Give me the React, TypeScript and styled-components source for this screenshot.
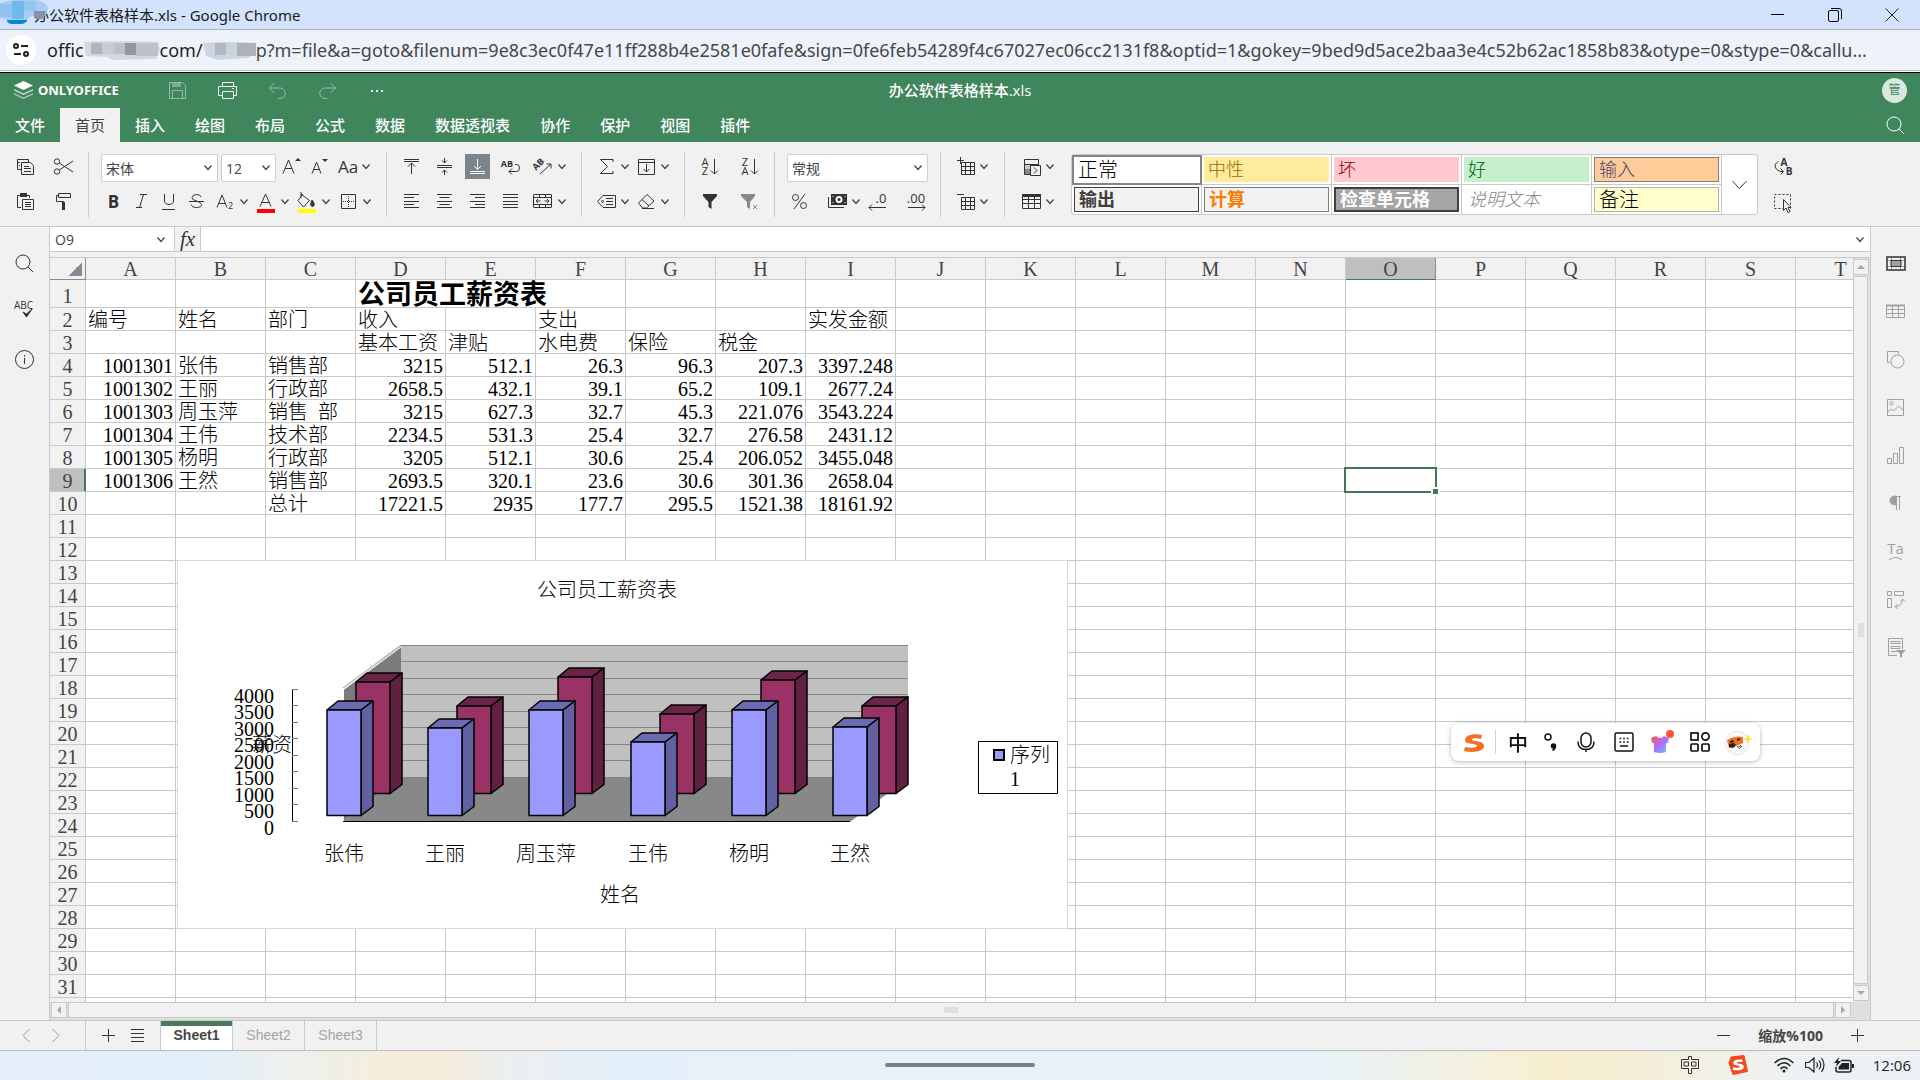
import React from "react";
import styled, { createGlobalStyle, css } from "styled-components";

const UI = `"Open Sans", "Noto Sans CJK SC", sans-serif`;
const CHROME = `"Noto Sans", "Noto Sans CJK SC", sans-serif`;
const SONG = `"Liberation Serif", "Noto Sans CJK SC", serif`;
const LINE = "#c9c9c9";
const PANEL = "#f1f1f1";
const GREEN = "#40865c";
const INK = "#333333";

const Global = createGlobalStyle`
  *, *::before, *::after { box-sizing: border-box; }
  body { margin: 0; background: #fff; font-family: ${UI}; font-size: 15px; color: ${INK}; }
  button, input, select { font: inherit; color: inherit; margin: 0; }
  svg { display: block; }
`;

const Page = styled.div`
  display: flex;
  flex-direction: column;
  height: 100vh;
  overflow: hidden;
`;

const PlainButton = styled.button`
  display: flex;
  align-items: center;
  justify-content: center;
  padding: 0;
  border: 0;
  background: transparent;
`;

/* ---------- browser window ---------- */

const TitleBar = styled.header`
  display: flex;
  align-items: center;
  flex: none;
  height: 30px;
  background: #d3e3fd;
  border-bottom: 1px solid #aeb2b8;
  color: #1a1a1a;
  font-family: ${CHROME};
`;
const TitleIcon = styled.div`
  position: relative;
  z-index: 1;
  flex: none;
  width: 34px;
  height: 29px;
`;
const TitleText = styled.div`
  flex: 1;
  padding-bottom: 1px;
  white-space: nowrap;
`;
const WindowButton = styled(PlainButton)`
  width: 57px;
  height: 29px;
`;
const UrlBar = styled.div`
  display: flex;
  align-items: center;
  flex: none;
  height: 41px;
  padding: 0 24px 0 6px;
  background: #edf2fb;
  border-bottom: 1px solid #b9bcc2;
`;
const SiteInfo = styled(PlainButton)`
  flex: none;
  width: 30px;
  height: 30px;
  margin-right: 11px;
  border-radius: 50%;
  background: #fff;
`;
const UrlText = styled.div`
  flex: 1;
  display: flex;
  align-items: center;
  min-width: 0;
  font-family: ${CHROME};
  font-size: 18px;
  line-height: 28px;
  color: #474747;
`;
const UrlHost = styled.span`
  color: #1f1f1f;
`;
const UrlTail = styled.span`
  flex: 1;
  min-width: 0;
  overflow: hidden;
  white-space: nowrap;
`;
const Mosaic = styled.svg`
  flex: none;
`;

/* ---------- application header ---------- */

const AppHeader = styled.div`
  flex: none;
  margin-top: 1px;
  border-top: 1px solid #000;
  background: ${GREEN};
  color: #fff;
`;
const HeaderRow = styled.div`
  display: grid;
  grid-template-columns: 1fr auto 1fr;
  align-items: center;
  height: 35px;
`;
const HeaderLeft = styled.div`
  display: flex;
  align-items: center;
`;
const Brand = styled.div`
  display: flex;
  align-items: center;
  gap: 5px;
  width: 152px;
  padding: 0 0 2px 14px;
  font-family: ${CHROME};
  font-size: 13px;
  font-weight: 700;
`;
const HeaderButton = styled(PlainButton)<{ $dim?: boolean }>`
  width: 50px;
  height: 30px;
  opacity: ${(p) => (p.$dim ? 0.45 : 0.9)};
`;
const DocTitle = styled.div`
  padding-bottom: 2px;
  font-weight: 500;
`;
const Avatar = styled.div`
  justify-self: end;
  width: 25px;
  height: 25px;
  margin-right: 13px;
  border-radius: 50%;
  background: #d9e7de;
  color: ${GREEN};
  font-size: 12px;
  line-height: 24px;
  text-align: center;
`;
const TabRow = styled.nav`
  display: flex;
  height: 34px;
`;
const RibbonTab = styled.button<{ $on?: boolean }>`
  padding: 0 15px;
  border: 0;
  background: ${(p) => (p.$on ? PANEL : "transparent")};
  && { color: ${(p) => (p.$on ? "#444" : "#fff")}; font-weight: ${(p) => (p.$on ? 400 : 500)}; }
  line-height: 34px;
`;
const TabSearch = styled(PlainButton)`
  width: 25px;
  height: 34px;
  margin: 0 12px 0 auto;
`;

/* ---------- toolbar ---------- */

const Toolbar = styled.div`
  display: flex;
  flex: none;
  height: 85px;
  padding: 12px 0 11px;
  background: ${PANEL};
  border-bottom: 1px solid ${LINE};
`;
const Group = styled.div`
  display: flex;
  flex-direction: column;
  flex: none;
  gap: 10px;
  padding: 2px 12px 0;
  border-right: 1px solid ${LINE};
  height: 65px;
  margin-top: -2px;
  &:first-child { padding-left: 13px; }
  &:last-child { border-right: 0; }
`;
const WideGroup = styled(Group)<{ $last?: boolean }>`
  padding-left: ${(p) => (p.$last ? 14 : 12)}px;
  padding-right: ${(p) => (p.$last ? 14 : 13)}px;
  ${(p) => p.$last && css`border-right: 0;`}
`;
const ToolRow = styled.div<{ $gap: number }>`
  display: flex;
  height: 25px;
  gap: ${(p) => p.$gap}px;
`;
const NumberRow = styled.div`
  display: grid;
  grid-template-columns: 38px 39px 39px 25px;
  justify-items: start;
`;
const Tool = styled(PlainButton)<{ $on?: boolean }>`
  flex: none;
  height: 25px;
  background: ${(p) => (p.$on ? "#7d858c" : "transparent")};
  && { color: ${(p) => (p.$on ? "#fff" : INK)}; }
`;
const SelectBox = styled.span<{ $w: number }>`
  position: relative;
  flex: none;
  width: ${(p) => p.$w}px;
  height: 28px;
  select {
    appearance: none;
    width: 100%;
    height: 28px;
    padding: 0 4px;
    border: 1px solid #cfcfcf;
    border-radius: 2px;
    background: #fff;
    color: #444;
    font-size: 14px;
  }
  svg {
    position: absolute;
    right: 3px;
    top: 1px;
    pointer-events: none;
  }
`;
const StyleGallery = styled.div`
  display: flex;
  flex: none;
  height: 61px;
  border: 1px solid ${LINE};
  border-radius: 3px;
  background: #fff;
`;
const StyleGrid = styled.div`
  display: grid;
  grid-template-columns: repeat(5, 130px);
  grid-template-rows: 30px 29px;
`;
const StyleSlot = styled.div<{ $picked?: boolean }>`
  padding: 2px;
  border-right: 1px solid ${LINE};
  border-bottom: 1px solid ${LINE};
  ${(p) => p.$picked && css`
    padding: 0;
    border: 2px solid #858585;
  `}
  &:nth-child(n + 6) { border-bottom: 0; }
`;
const StyleChip = styled.button<{ $bg: string; $fg: string; $edge: string; $bold?: boolean; $italic?: boolean; $big?: boolean }>`
  display: block;
  width: 100%;
  height: 100%;
  padding: 0 4px;
  border: ${(p) => p.$edge};
  background: ${(p) => p.$bg};
  && {
    color: ${(p) => p.$fg};
    font-family: ${SONG};
    font-size: ${(p) => (p.$big ? 20 : 18)}px;
    font-weight: ${(p) => (p.$bold ? 700 : 300)};
    font-style: ${(p) => (p.$italic ? "italic" : "normal")};
    line-height: 22px;
  }
  text-align: left;
  overflow: hidden;
`;
const MoreStyles = styled(PlainButton)`
  width: 35px;
`;

/* ---------- work area ---------- */

const Work = styled.div`
  display: flex;
  flex: 1;
  min-height: 0;
  background: ${PANEL};
`;
const LeftRail = styled.aside`
  display: flex;
  flex-direction: column;
  align-items: center;
  flex: none;
  width: 50px;
  padding-top: 12px;
  border-right: 1px solid ${LINE};
`;
const RightRail = styled(LeftRail)`
  border-right: 0;
  border-left: 1px solid ${LINE};
`;
const RailButton = styled(PlainButton)<{ $dim?: boolean }>`
  width: 48px;
  height: 48px;
  flex: none;
  && { color: ${(p) => (p.$dim ? "#a0a0a0" : INK)}; }
`;
const Center = styled.main`
  display: flex;
  flex-direction: column;
  flex: 1;
  min-width: 0;
`;
const FormulaBar = styled.div`
  display: flex;
  flex: none;
  height: 25px;
  margin-bottom: 5px;
  padding-right: 3px;
  border-bottom: 1px solid ${LINE};
  background: #fff;
`;
const NameBox = styled.div`
  display: flex;
  align-items: center;
  width: 125px;
  border-right: 1px solid ${LINE};
  input {
    width: 105px;
    padding: 0 5px;
    border: 0;
    background: transparent;
    color: #444;
    font-size: 14px;
  }
`;
const FxButton = styled(PlainButton)`
  width: 26px;
  border-right: 1px solid ${LINE};
  background: ${PANEL};
  && { font: italic 21px "Liberation Serif", serif; }
`;
const FormulaInput = styled.input`
  flex: 1;
  min-width: 0;
  border: 0;
  background: #fff;
`;
const SheetRow = styled.div`
  display: flex;
  flex: 1;
  min-height: 0;
  border-top: 1px solid ${LINE};
`;
const SheetView = styled.div`
  position: relative;
  flex: 1;
  min-width: 0;
  overflow: hidden;
  background: #fff;
`;
const Sheet = styled.table`
  width: 1836px;
  table-layout: fixed;
  border-collapse: separate;
  border-spacing: 0;
  font-family: ${SONG};
  font-size: 20px;
  font-weight: 300;
  line-height: 20px;
  color: #000;
`;
const Head = styled.th<{ $on?: "col" | "row" }>`
  height: 22px;
  padding: 2px 0 0;
  border-right: 1px solid ${LINE};
  border-bottom: 1px solid ${LINE};
  background: ${(p) => (p.$on ? "#bfbfbf" : PANEL)};
  color: #444;
  font-weight: 400;
  line-height: 19px;
  ${(p) => p.$on === "col" && css`border-bottom-color: #3f7a58; border-right-color: #8c8c8c;`}
  ${(p) => p.$on === "row" && css`box-shadow: inset -1px 0 #3f7a58; border-right-color: #3f7a58;`}
`;
const RowHead = styled(Head)<{ $tall?: boolean }>`
  height: ${(p) => (p.$tall ? 28 : 23)}px;
  padding-top: ${(p) => (p.$tall ? 6 : 2)}px;
`;
const Corner = styled(Head)`
  border-right-color: #8c8c8c;
  border-bottom-color: #8c8c8c;
  background: linear-gradient(135deg, transparent 50%, #858b96 50%) right 3px bottom 3px / 14px 14px no-repeat, ${PANEL};
`;
const Cell = styled.td<{ $num?: boolean; $title?: boolean; $active?: boolean }>`
  position: relative;
  padding: 2px 2px 0;
  border-right: 1px solid ${LINE};
  border-bottom: 1px solid ${LINE};
  text-align: ${(p) => (p.$num ? "right" : "left")};
  white-space: pre;
  ${(p) => p.$title && css`
    padding-top: 4px;
    font-size: 27px;
    font-weight: 700;
    line-height: 23px;
  `}
  ${(p) => p.$active && css`
    z-index: 1;
    &::before {
      content: "";
      position: absolute;
      inset: -2px;
      border: 2px solid #3f7a58;
    }
    &::after {
      content: "";
      position: absolute;
      right: -5px;
      bottom: -5px;
      width: 9px;
      height: 9px;
      border: 2px solid #fff;
      background: #3f7a58;
    }
  `}
`;
const ChartFrame = styled.figure`
  position: absolute;
  left: 127px;
  top: 302px;
  margin: 0;
  background: #fff;
  border: 1px solid #d9d9d9;
`;
const ChartText = styled.text`
  font-family: ${SONG};
  font-size: 20px;
  font-weight: 300;
  fill: #000;
`;
const VScroll = styled.div`
  display: flex;
  flex-direction: column;
  gap: 1px;
  flex: none;
  width: 17px;
  padding: 1px 2px 1px 0;
  background: #dfdfdf;
`;
const HScroll = styled.div`
  display: flex;
  flex: none;
  gap: 1px;
  height: 18px;
  padding: 0 19px 2px 1px;
  background: #dfdfdf;
`;
const ScrollButton = styled(PlainButton)`
  flex: none;
  width: 16px;
  height: 16px;
  border: 1px solid ${LINE};
  background: ${PANEL};
`;
const ScrollThumb = styled.div`
  display: flex;
  align-items: center;
  justify-content: center;
  flex: 1;
  border: 1px solid ${LINE};
  background: ${PANEL};
`;
const Grip = styled.span<{ $tall?: boolean }>`
  width: ${(p) => (p.$tall ? 6 : 14)}px;
  height: ${(p) => (p.$tall ? 14 : 6)}px;
  background: #dedede;
`;

/* ---------- sheet tabs ---------- */

const StatusBar = styled.div`
  display: flex;
  flex: none;
  height: 31px;
  border-top: 1px solid ${LINE};
  border-bottom: 1px solid #bbb;
  background: ${PANEL};
`;
const StatusGroup = styled.div`
  display: flex;
  align-items: center;
  justify-content: center;
  gap: 2px;
  border-right: 1px solid ${LINE};
  &:first-child { width: 86px; padding-right: 3px; }
  &:nth-child(2) { width: 75px; }
`;
const StatusButton = styled(PlainButton)`
  width: 27px;
  height: 27px;
`;
const SheetTab = styled.button<{ $on?: boolean }>`
  width: 72px;
  padding: 0 0 2px;
  border: 0;
  border-right: 1px solid ${LINE};
  background: ${(p) => (p.$on ? "#fff" : "transparent")};
  box-shadow: ${(p) => (p.$on ? "inset 0 5px #4b7a5d" : "none")};
  && {
    color: ${(p) => (p.$on ? "#444" : "#a5a5a5")};
    font-family: "Liberation Sans", sans-serif;
    font-size: 14px;
    font-weight: ${(p) => (p.$on ? 700 : 400)};
  }
`;
const ZoomBox = styled.div`
  display: flex;
  align-items: center;
  gap: 21px;
  margin-left: auto;
  padding-right: 49px;
`;
const ZoomLabel = styled.span`
  padding-bottom: 2px;
  font-size: 14px;
  font-weight: 700;
  color: #444;
`;

/* ---------- desktop ---------- */

const Taskbar = styled.footer`
  display: grid;
  grid-template-columns: 1fr auto 1fr;
  align-items: center;
  flex: none;
  height: 29px;
  padding-bottom: 1px;
  background: linear-gradient(90deg, #e6f0fa 0%, #e2effb 10%, #edf0ee 15%, #f4eedd 20%, #f4ecd9 23%, #edefef 26%, #e4f0fa 32%, #e8f1f8 45%, #e6f1f9 60%, #e9f1f5 70%, #f3f0dd 77%, #f7efcf 81%, #f4efdb 86%, #eef1f2 93%, #ebf1f6 100%);
`;
const HomePill = styled.div`
  grid-column: 2;
  width: 150px;
  height: 4px;
  border-radius: 2px;
  background: #7c7f82;
`;
const Tray = styled.div`
  display: flex;
  align-items: center;
  justify-content: flex-end;
  padding-right: 9px;
  color: #222;
`;
const TrayIcon = styled.div<{ $w: number }>`
  display: flex;
  justify-content: center;
  width: ${(p) => p.$w}px;
`;
const Clock = styled.time`
  width: 52px;
  text-align: right;
`;
const ImeBar = styled.div`
  position: fixed;
  right: 160px;
  top: 723px;
  display: flex;
  align-items: center;
  height: 38px;
  padding: 0 3px 0 9px;
  border-radius: 8px;
  background: #fff;
  box-shadow: 0 1px 5px rgba(0, 0, 0, 0.28);
  color: #111;
`;
const ImeButton = styled(PlainButton)<{ $w: number }>`
  width: ${(p) => p.$w}px;
  height: 34px;
  && { font-size: 20px; font-weight: 500; }
`;
const ImeRule = styled.span`
  width: 1px;
  height: 24px;
  margin: 0 5px 0 8px;
  background: #d0d0d0;
`;

/* ---------- icons, drawn on a 25px box ---------- */

const T = ({ x, y, s, b, children }: { x: number; y: number; s: number; b?: boolean; children: React.ReactNode }) => (
  <text x={x} y={y} fontSize={s} fontWeight={b ? 700 : 400} textAnchor="middle" fill="currentColor" stroke="none" fontFamily={'"Open Sans", sans-serif'}>{children}</text>
);

const cells = (x: number, y: number) => (
  <path d={`M${x} ${y}h13v12h-13zM${x} ${y + 4}h13M${x} ${y + 8}h13M${x + 4} ${y}v12M${x + 9} ${y}v12`} />
);

const ICONS: Record<string, React.ReactNode> = {
  copy: <path d="M8 15.500H4.500V5.500H15.500V8M8.500 8.500H17.500L20.500 11.500V20.500H8.500ZM11 12.500H16M11 14.500H18M11 17.500H18M7 8.500H4.500M7 11.500H6" />,
  cut: <><circle cx="6" cy="7.500" r="2.700" /><circle cx="6" cy="17.500" r="2.700" /><path d="M8.200 9L22 18M8.200 16L22 7" /></>,
  paste: <><path d="M8 18.500H4.500V6.500H16.500V9M9.500 10.500H20.500V20.500H9.500ZM12 13.500H18M12 15.500H18M12 17.500H18" /><path d="M7 4h7v4H7z" fill="currentColor" stroke="none" /></>,
  brush: <><path d="M7.500 4.500H19.500V8.500H7.500ZM7.500 6.500H5.500V12.500H12.500V14" /><path d="M11 13h3v8h-3z" fill="currentColor" stroke="none" /></>,
  fontUp: <><path d="M4 19.500L9.500 6L15 19.500M6 14.500H13" /><path d="M16 7l3-3 3 3z" fill="currentColor" stroke="none" /></>,
  fontDown: <><path d="M5 19.500L9.500 8L14 19.500M6.500 15.500H12.500" /><path d="M15 5l3 3 3-3z" fill="currentColor" stroke="none" /></>,
  caseAa: <T x={13} y={19} s={17}>Aa</T>,
  bold: <T x={12.5} y={19} s={17} b>B</T>,
  italic: <path d="M11 5.500H18M7 18.500H13M14.500 5.500L10.500 18.500" />,
  underline: <path d="M7.500 5V13A5 4.500 0 0 0 16.500 13V5M5 20.500H18" />,
  strike: <><path d="M16 8Q15.500 5.500 11.500 5.500T7 8.500Q7 11 11.500 12T16.500 15.500Q16.500 18.500 11.500 18.500T6.500 15.500M4 12.500H19" /></>,
  sub: <><path d="M4 18.500L9 6L14 18.500M6 14.500H12.500" /><T x={17.5} y={20} s={9}>2</T></>,
  fontColor: <><path d="M6 17.500L11.500 5L17 17.500M8 13.500H15" /><path d="M3 20h18v4H3z" fill="#ff0000" stroke="none" /></>,
  fillColor: <><path d="M6 5l8.500 6.500-6 6.500-5.500-6.500 5-6.500M6 3v6" /><path d="M17 11q4 5 1 6.500q-4 0-1-6.500z" fill="currentColor" /><path d="M3 20h18v4H3z" fill="#ffff00" stroke="none" /></>,
  borders: <><path d="M5.500 5.500h14v14h-14z" /><path d="M12.500 7v12M7 12.500h12" strokeDasharray="1 1" /></>,
  alignTop: <path d="M5 5.500H20M5 7.500H20M12.500 20V9M9 12.500L12.500 9L16 12.500" />,
  alignMiddle: <path d="M5 11.500H20M5 13.500H20M12.500 4V9M10 6.500L12.500 9L15 6.500M12.500 21V16M10 18.500L12.500 16L15 18.500" />,
  alignBottom: <path d="M5 17.500H20M5 19.500H20M12.500 5V15M9 12L12.500 15.500L16 12" />,
  wrap: <><T x={9} y={13} s={9} b>AB</T><path d="M17 10.500H18.500A3 3.500 0 0 1 18.500 17.500H11M14 14.500L11 17.500L14 20.500" /></>,
  orient: <><g transform="rotate(-45 8 11)"><T x={8} y={13} s={9} b>AB</T></g><path d="M9 20L20 10M15.500 10H20V14.500" /></>,
  left: <path d="M5 5.500H20M5 8.500H15M5 12.500H20M5 15.500H15M5 18.500H20" />,
  center: <path d="M5 5.500H20M7.500 8.500H17.500M5 12.500H20M7.500 15.500H17.500M5 18.500H20" />,
  right: <path d="M5 5.500H20M10 8.500H20M5 12.500H20M10 15.500H20M5 18.500H20" />,
  justify: <path d="M5 5.500H20M5 8.500H20M5 12.500H20M5 15.500H20M5 18.500H20" />,
  merge: <path d="M3 5.500H20M2.500 5.500V18.500M20.500 5.500V18.500M3 18.500H20M3 8.500H20M3 15.500H20M8.500 5V8M14.500 5V8M8.500 16V19M14.500 16V19M5 12H9.500M13.500 12H18M7 10L5 12L7 14M16 10L18 12L16 14" />,
  sum: <path d="M19 8V5.500H6.500L13.500 12.500L6.500 19.500H19V17" />,
  fillDown: <path d="M4.500 5.500H20.500V20.500H4.500ZM4.500 8.500H20.500M12.500 10V18M9.500 15L12.500 18L15.500 15" />,
  tag: <><path d="M9 6.500H21.500V18.500H9L3.500 12.500ZM12 9.500H19M12 12.500H19M12 15.500H19" /><circle cx="8.500" cy="12.500" r="1" /></>,
  eraser: <path d="M4.500 14L13 5.500L20 12L12.500 19H8.500ZM8 10.500L15 17M8 19.500H20" />,
  sortAZ: <><T x={8} y={12} s={11}>A</T><T x={8} y={21} s={11}>Z</T><path d="M17.500 5V20M14 16.500L17.500 20L21 16.500" /></>,
  sortZA: <><T x={8} y={12} s={11}>Z</T><T x={8} y={21} s={11}>A</T><path d="M17.500 5V20M14 16.500L17.500 20L21 16.500" /></>,
  filter: <path d="M6 5h14v2l-5.500 6v7l-3-2v-5l-5.500-6z" fill="currentColor" stroke="none" />,
  clearFilter: <g opacity="0.550"><path d="M4 5h14v2l-5 6v7l-3-2v-5l-6-6z" fill="currentColor" stroke="none" /><path d="M16 16l4 4M20 16l-4 4" /></g>,
  percent: <><circle cx="8.500" cy="8.500" r="3" /><circle cx="16.500" cy="16.500" r="3" /><path d="M18 5L7 20" /></>,
  money: <><path d="M6 5h16v11H6z" fill="currentColor" stroke="none" /><path d="M3.500 8V18.500H19" /><circle cx="14" cy="10.500" r="3.500" fill="#fff" stroke="none" /><circle cx="14" cy="10.500" r="1.500" fill="currentColor" stroke="none" /><path d="M8 7v1M20 7v1M8 13v1M20 13v1" stroke="#fff" /></>,
  decLess: <><T x={17} y={14} s={13}>.0</T><path d="M22 18.500H5M8 15.500L5 18.500L8 21.500" /></>,
  decMore: <><T x={13} y={14} s={13}>.00</T><path d="M5 18.500H22M19 15.500L22 18.500L19 21.500" /></>,
  insertCells: <>{cells(8.5, 8.5)}<path d="M4 6.500H11M7.500 3V10" /></>,
  deleteCells: <>{cells(8.5, 8.5)}<path d="M4 5.500H11" /></>,
  condFormat: <><path d="M5.500 5.500H19.500V20.500H5.500ZM5.500 10.500H19.500M5.500 15.500H12" /><path d="M6 15h6v5H6z" fill="#888" stroke="none" /><path d="M6 11h13v4H6z" fill="#ccc" stroke="none" /><path d="M11.500 11.500h10v10h-10z" fill="#f1f1f1" /><path d="M15 13.500l3 3-3 3" /></>,
  table: <><path d="M3.500 5.500h18v14h-18zM3.500 10.500h18M3.500 14.500h18M9.500 7v12M15.500 7v12" /><path d="M3 5h19v3H3z" fill="currentColor" stroke="none" /></>,
  replace: <><T x={14} y={12} s={10} b>A</T><T x={19} y={21} s={10} b>B</T><path d="M8 7.500Q1 13 10 17.500H13M10.500 14.500L13.500 17.500L10.500 20.500" /></>,
  selectAll: <><path d="M4.500 5.500h16v14h-16z" strokeDasharray="2 2" /><path d="M13.500 10.500V21.500L16 19L18 23.500L20 22.500L18 18.500H21Z" fill="#f1f1f1" /></>,
  search: <><circle cx="11" cy="11" r="7" /><path d="M16 16L21 21" /></>,
  spell: <><T x={11.5} y={10} s={10}>ABC</T><path d="M11 13l3.500 5L20 10l-5.500 5z" fill="currentColor" /></>,
  info: <><circle cx="12.500" cy="12.500" r="9" /><path d="M12.500 11V17M12.500 8V9.500" /></>,
  cellSet: <><path d="M4 6h18v13H4z" strokeWidth="1.500" /><path d="M4 9.500H22M4 15.500H22M8.500 6V19M17.500 6V19" opacity="0.500" /><path d="M8 9.500h10v6H8z" fill="#a0a0a0" /></>,
  tableSet: <><path d="M3.500 6.500h18v12h-18zM3.500 10.500h18M3.500 14.500h18M9.500 6v12M15.500 6v12" /><path d="M3 5.500h19v2H3z" fill="currentColor" stroke="none" /></>,
  shape: <><path d="M7 15.500H4.500V4.500H15.500V7" /><circle cx="14.500" cy="14.500" r="6.500" /></>,
  image: <><path d="M4.500 4.500h16v16h-16zM4.500 17l4-3 2 2 5-5 5 4.500" /><circle cx="8.500" cy="8.500" r="1.700" /></>,
  chart: <path d="M4.500 15.500h4v5h-4zM10.500 10.500h4v10h-4zM16.500 4.500h4v16h-4z" />,
  para: <><path d="M11 5.500H18M13.500 5.500V19M16.500 5.500V19" /><path d="M13 5Q7 5 7 9.500T13 14z" fill="currentColor" /></>,
  textArt: <><T x={12.5} y={15} s={15}>Ta</T><path d="M6 21Q12.500 16 19 21" /></>,
  pivot: <path d="M4.500 4.500h4v4h-4zM11.500 4.500h9v4h-9zM4.500 11.500h4v9h-4zM12 19.500Q19 20 19.500 12.500M17 14.500L19.500 12L22 14.500M14.500 17L12 19.500L14.500 22" />,
  slicer: <><path d="M14 20.500H5.500V3.500H19.500V14M8 6.500H17V8.500H8ZM8 11.500H17V13.500H8ZM8 16.500H14" /><path d="M13 15h10l-4 4v4l-2-1.500V19z" fill="currentColor" stroke="none" /></>,
  save: <><path d="M4.500 4.500H17.500L20.500 7.500V20.500H4.500ZM7.500 20V12.500H17.500V20" /><path d="M7 4h9v5H7z" fill="currentColor" stroke="none" opacity="0.700" /></>,
  print: <path d="M7.500 9V4.500H18.500V9M7 17.500H3.500V8.500H21.500V17.500H19M7.500 13.500H18.500V20.500H7.500ZM17 10.500H19" />,
  undo: <path d="M9.500 5L4.500 10L9.500 15M4.500 10H15A5 5 0 0 1 15 20.500H13" />,
  redo: <path d="M15.500 5L20.500 10L15.500 15M20.500 10H10A5 5 0 0 0 10 20.500H12" />,
  dots: <path d="M6 12h2v2H6zM11 12h2v2h-2zM16 12h2v2h-2z" fill="currentColor" stroke="none" />,
  prev: <path d="M15.500 6L9 12.500L15.500 19" stroke="#999" />,
  next: <path d="M9.500 6L16 12.500L9.500 19" stroke="#999" />,
  plus: <path d="M6 12.500H19M12.500 6V19" />,
  minus: <path d="M6 12.500H19" />,
  list: <path d="M6 6.500H19M6 10.500H19M6 14.500H19M6 18.500H19" />,
  bigChevron: <path d="M5.500 9L12.500 16.500L19.500 9" />,
};

const Icon = ({ name }: { name: string }) => (
  <svg width="25" height="25" viewBox="0 0 25 25" fill="none" stroke="currentColor" strokeWidth="1" aria-hidden="true">{ICONS[name]}</svg>
);
const Chevron = () => (
  <svg width="13" height="25" viewBox="0 0 13 25" fill="none" stroke="#444" strokeWidth="1.300" aria-hidden="true"><path d="M2.500 10.500L6 14.500L9.500 10.500" /></svg>
);
const Btn = ({ n, l, drop, on }: { n: string; l: string; drop?: boolean; on?: boolean }) => (
  <Tool type="button" aria-label={l} $on={on}><Icon name={n} />{drop && <Chevron />}</Tool>
);
const Pick = ({ label, value, w }: { label: string; value: string; w: number }) => (
  <SelectBox $w={w}>
    <select aria-label={label} defaultValue={value}><option>{value}</option></select>
    <Chevron />
  </SelectBox>
);

/* ---------- sheet data ---------- */

const COLS = "ABCDEFGHIJKLMNOPQRST".split("");
const ROWS = Array.from({ length: 31 }, (_, i) => i + 1);
const DATA: Record<number, Record<string, string>> = {
  1: { D: "公司员工薪资表" },
  2: { A: "编号", B: "姓名", C: "部门", D: "收入", F: "支出", I: "实发金额" },
  3: { D: "基本工资", E: "津贴", F: "水电费", G: "保险", H: "税金" },
  4: { A: "1001301", B: "张伟", C: "销售部", D: "3215", E: "512.1", F: "26.3", G: "96.3", H: "207.3", I: "3397.248" },
  5: { A: "1001302", B: "王丽", C: "行政部", D: "2658.5", E: "432.1", F: "39.1", G: "65.2", H: "109.1", I: "2677.24" },
  6: { A: "1001303", B: "周玉萍", C: "销售  部", D: "3215", E: "627.3", F: "32.7", G: "45.3", H: "221.076", I: "3543.224" },
  7: { A: "1001304", B: "王伟", C: "技术部", D: "2234.5", E: "531.3", F: "25.4", G: "32.7", H: "276.58", I: "2431.12" },
  8: { A: "1001305", B: "杨明", C: "行政部", D: "3205", E: "512.1", F: "30.6", G: "25.4", H: "206.052", I: "3455.048" },
  9: { A: "1001306", B: "王然", C: "销售部", D: "2693.5", E: "320.1", F: "23.6", G: "30.6", H: "301.36", I: "2658.04" },
  10: { C: "总计", D: "17221.5", E: "2935", F: "177.7", G: "295.5", H: "1521.38", I: "18161.92" },
};

const Grid = () => (
  <Sheet>
    <colgroup>
      <col style={{ width: 36 }} />
      {COLS.map((c) => <col key={c} />)}
    </colgroup>
    <thead>
      <tr>
        <Corner />
        {COLS.map((c) => <Head key={c} scope="col" $on={c === "O" ? "col" : undefined}>{c}</Head>)}
      </tr>
    </thead>
    <tbody>
      {ROWS.map((r) => (
        <tr key={r}>
          <RowHead scope="row" $tall={r === 1} $on={r === 9 ? "row" : undefined}>{r}</RowHead>
          {COLS.filter((c) => !(r === 1 && (c === "E" || c === "F"))).map((c) => {
            const v = DATA[r]?.[c];
            const title = r === 1 && c === "D";
            return (
              <Cell key={c} colSpan={title ? 3 : 1} $title={title} $num={!!v && /^[\d.]+$/.test(v)} $active={r === 9 && c === "O"}>{v}</Cell>
            );
          })}
        </tr>
      ))}
      <tr>
        <RowHead as="td" />
        {COLS.map((c) => <Cell key={c} />)}
      </tr>
    </tbody>
  </Sheet>
);

/* ---------- chart ---------- */

const PEOPLE = [
  { name: "张伟", front: 710, back: 682 },
  { name: "王丽", front: 728, back: 706 },
  { name: "周玉萍", front: 710, back: 677 },
  { name: "王伟", front: 742, back: 714 },
  { name: "杨明", front: 710, back: 680 },
  { name: "王然", front: 727, back: 706 },
];
const STEP = [0, 101, 202, 304, 405, 506];
const TICKS = [0, 16, 33, 49, 66, 82, 99, 115, 132];

const Bar = ({ x, top, base, colors }: { x: number; top: number; base: number; colors: string[] }) => (
  <g stroke="#000" strokeWidth="1.500" strokeLinejoin="round">
    <path d={`M${x} ${top}l11 -9h35l-12 9z`} fill={colors[1]} />
    <path d={`M${x + 34} ${top}l12 -9V${base - 9}l-12 9z`} fill={colors[2]} />
    <path d={`M${x} ${top}h34V${base}h-34z`} fill={colors[0]} />
  </g>
);

const Chart = () => (
  <ChartFrame>
    <svg width="889" height="367" viewBox="178 561 889 367" role="img" aria-label="公司员工薪资表">
      <ChartText x="607" y="597" textAnchor="middle">公司员工薪资表</ChartText>
      <path d="M344 689L401 646V778L344 821Z" fill="#7b7b7b" />
      <path d="M401 645H908V778H401Z" fill="#c0c0c0" />
      <path d="M344 821L401 778H908L850 822H344Z" fill="#888" />
      <path d="M343 688L401 645" stroke="#999" />
      <path d="M343 690L401 647" stroke="#fff" />
      <g stroke="#858585">{TICKS.map((t) => <path key={t} d={`M401 ${645.5 + t}H908`} />)}</g>
      <path d="M343 821.500H850" stroke="#000" />
      <path d="M292.500 689V822" stroke="#000" />
      <g stroke="#777">{TICKS.map((t) => <path key={t} d={`M292 ${689.5 + t}H298`} />)}</g>
      {PEOPLE.map((p, i) => <Bar key={p.name} x={356 + STEP[i]} top={p.back} base={793.5} colors={["#993366", "#6b2447", "#612041"]} />)}
      {PEOPLE.map((p, i) => <Bar key={p.name} x={327 + STEP[i]} top={p.front} base={815.5} colors={["#9999ff", "#6b6bb3", "#6161a2"]} />)}
      {TICKS.map((t, i) => <ChartText key={t} x="274" y={703 + t} textAnchor="end">{4000 - i * 500}</ChartText>)}
      <ChartText x="272" y="752" textAnchor="middle">薪资</ChartText>
      {PEOPLE.map((p, i) => <ChartText key={p.name} x={344 + STEP[i]} y="861" textAnchor="middle">{p.name}</ChartText>)}
      <ChartText x="620" y="902" textAnchor="middle">姓名</ChartText>
      <path d="M978.500 741.500h79v52h-79z" fill="#fff" stroke="#000" />
      <path d="M994 750h10v10h-10z" fill="#9999ff" stroke="#000" strokeWidth="2" />
      <ChartText x="1010" y="762">序列</ChartText>
      <ChartText x="1010" y="786">1</ChartText>
    </svg>
  </ChartFrame>
);

/* ---------- style gallery ---------- */

const STYLES = [
  { t: "正常", $bg: "#fff", $fg: "#000", $edge: "0", $big: true, picked: true },
  { t: "中性", $bg: "#ffeb9c", $fg: "#9c6500", $edge: "0" },
  { t: "坏", $bg: "#ffc7ce", $fg: "#9c0006", $edge: "0" },
  { t: "好", $bg: "#c6efce", $fg: "#006100", $edge: "0" },
  { t: "输入", $bg: "#ffcc99", $fg: "#3f3f76", $edge: "1px solid #7f7f7f" },
  { t: "输出", $bg: "#f2f2f2", $fg: "#3f3f3f", $edge: "1px solid #3f3f3f", $bold: true },
  { t: "计算", $bg: "#f2f2f2", $fg: "#fa7d00", $edge: "1px solid #7f7f7f", $bold: true },
  { t: "检查单元格", $bg: "#a5a5a5", $fg: "#fff", $edge: "2px solid #3f3f3f", $bold: true },
  { t: "说明文本", $bg: "#fff", $fg: "#7f7f7f", $edge: "0", $italic: true },
  { t: "备注", $bg: "#ffffcc", $fg: "#000", $edge: "1px solid #b2b2b2", $big: true },
];

const Triangle = ({ d }: { d: string }) => (
  <svg width="8" height="8" viewBox="0 0 8 8" fill="#a8a8a8" aria-hidden="true"><path d={d} /></svg>
);

const LETTER_S = "M20 3C12 1 3 3 3 8C3 13 15 11 15 14C15 16 8 16 3 15L2 19C10 21 22 20 22 14C22 8 10 10 10 7.500C10 5.500 16 6 19 7Z";

export default function App() {
  return (
    <Page>
      <Global />
      <TitleBar>
        <TitleIcon>
          <svg width="48" height="29" viewBox="0 0 48 29" aria-hidden="true">
            <path d="M7 18h20v3q-2 3-5 3H12q-4 0-5-3z" fill="#0d86d6" />
            <path d="M0 3q8-3 18-3h20q10 3 10 10l-3 6H32l-6 4H8L0 18z" fill="#a9cdf2" />
            <path d="M0 4h12v13H0z" fill="#8fc4f1" /><path d="M12 1h12v18H12z" fill="#6fb9ec" /><path d="M24 1h12v10H24z" fill="#90c8f0" />
            <path d="M34 11h12l-2 7q-6 3-10 0z" fill="#8792a8" />
          </svg>
        </TitleIcon>
        <TitleText>办公软件表格样本.xls - Google Chrome</TitleText>
        <WindowButton type="button" aria-label="最小化"><svg width="14" height="14" stroke="#000"><path d="M0 6.500H13" /></svg></WindowButton>
        <WindowButton type="button" aria-label="还原"><svg width="14" height="14" fill="none" stroke="#000"><rect x="0.500" y="2.500" width="10" height="11" rx="1.500" /><path d="M3 0.500H11Q13.500 0.500 13.500 3V11" /></svg></WindowButton>
        <WindowButton type="button" aria-label="关闭"><svg width="14" height="14" stroke="#222"><path d="M0.500 0.500L13.500 13.500M13.500 0.500L0.500 13.500" /></svg></WindowButton>
      </TitleBar>
      <UrlBar>
        <SiteInfo type="button" aria-label="网站信息">
          <svg width="16" height="16" viewBox="0 0 16 16" fill="none" stroke="#222" strokeWidth="2"><circle cx="3" cy="4" r="2" /><path d="M8 4h7M1 12h7" /><circle cx="13" cy="12" r="2" /></svg>
        </SiteInfo>
        <UrlText>
          <UrlHost>offic</UrlHost>
          <Mosaic width="76" height="22" viewBox="0 0 76 22"><path d="M0 3q30-2 74 0l2 8-4 9-44 1-4-3-22-1z" fill="#d3d7e0" /><path d="M7 4h11v11H7z" fill="#b3b3c0" /><path d="M18 4h12v11H18z" fill="#c9cacb" /><path d="M30 4h11v11H30z" fill="#bbbfca" /><path d="M41 4h11v12H41z" fill="#949698" /><path d="M52 4h22v13H52z" fill="#bcc1ca" /></Mosaic>
          <UrlHost>com/</UrlHost>
          <Mosaic width="53" height="22" viewBox="0 0 53 22"><path d="M0 4q25-2 52 0l1 10-8 5-30 2-12-4z" fill="#ccd6e1" /><path d="M12 4h11v12H12z" fill="#b5b7c8" /><path d="M23 4h11v12H23z" fill="#c7d5de" /><path d="M34 4h19v13H34z" fill="#afb1b7" /></Mosaic>
          <UrlTail>p?m=file&amp;a=goto&amp;filenum=9e8c3ec0f47e11ff288b4e2581e0fafe&amp;sign=0fe6feb54289f4c67027ec06cc2131f8&amp;optid=1&amp;gokey=9bed9d5ace2baa3e4c52b62ac1858b83&amp;otype=0&amp;stype=0&amp;callu...</UrlTail>
        </UrlText>
      </UrlBar>

      <AppHeader>
        <HeaderRow>
          <HeaderLeft>
            <Brand>
              <svg width="19" height="18" viewBox="0 0 19 18" fill="#fff" aria-hidden="true"><path d="M9.500 0L19 4.500L9.500 9L0 4.500Z" /><path d="M0 8L9.500 12.500L19 8V9.500L9.500 14L0 9.500Z" opacity="0.750" /><path d="M0 12L9.500 16.500L19 12V13.500L9.500 18L0 13.500Z" opacity="0.550" /></svg>
              ONLYOFFICE
            </Brand>
            <HeaderButton type="button" aria-label="保存" $dim><Icon name="save" /></HeaderButton>
            <HeaderButton type="button" aria-label="打印"><Icon name="print" /></HeaderButton>
            <HeaderButton type="button" aria-label="撤销" $dim><Icon name="undo" /></HeaderButton>
            <HeaderButton type="button" aria-label="重做" $dim><Icon name="redo" /></HeaderButton>
            <HeaderButton type="button" aria-label="更多"><Icon name="dots" /></HeaderButton>
          </HeaderLeft>
          <DocTitle>办公软件表格样本.xls</DocTitle>
          <Avatar>管</Avatar>
        </HeaderRow>
        <TabRow>
          {["文件", "首页", "插入", "绘图", "布局", "公式", "数据", "数据透视表", "协作", "保护", "视图", "插件"].map((t) => (
            <RibbonTab key={t} type="button" $on={t === "首页"}>{t}</RibbonTab>
          ))}
          <TabSearch type="button" aria-label="搜索"><Icon name="search" /></TabSearch>
        </TabRow>
      </AppHeader>

      <Toolbar>
        <Group>
          <ToolRow $gap={13}><Btn n="copy" l="复制" /><Btn n="cut" l="剪切" /></ToolRow>
          <ToolRow $gap={13}><Btn n="paste" l="粘贴" /><Btn n="brush" l="格式刷" /></ToolRow>
        </Group>
        <Group>
          <ToolRow $gap={3}>
            <Pick label="字体" value="宋体" w={117} /><Pick label="字号" value="12" w={55} />
            <Btn n="fontUp" l="增大字号" /><Btn n="fontDown" l="减小字号" /><Btn n="caseAa" l="更改大小写" drop />
          </ToolRow>
          <ToolRow $gap={3}>
            <Btn n="bold" l="加粗" /><Btn n="italic" l="倾斜" /><Btn n="underline" l="下划线" /><Btn n="strike" l="删除线" />
            <Btn n="sub" l="下标" drop /><Btn n="fontColor" l="字体颜色" drop /><Btn n="fillColor" l="填充颜色" drop /><Btn n="borders" l="边框" drop />
          </ToolRow>
        </Group>
        <Group>
          <ToolRow $gap={8}>
            <Btn n="alignTop" l="顶端对齐" /><Btn n="alignMiddle" l="垂直居中" /><Btn n="alignBottom" l="底端对齐" on /><Btn n="wrap" l="自动换行" /><Btn n="orient" l="方向" drop />
          </ToolRow>
          <ToolRow $gap={8}>
            <Btn n="left" l="左对齐" /><Btn n="center" l="居中" /><Btn n="right" l="右对齐" /><Btn n="justify" l="两端对齐" /><Btn n="merge" l="合并居中" drop />
          </ToolRow>
        </Group>
        <Group>
          <ToolRow $gap={2}><Btn n="sum" l="求和" drop /><Btn n="fillDown" l="填充" drop /></ToolRow>
          <ToolRow $gap={2}><Btn n="tag" l="命名范围" drop /><Btn n="eraser" l="清除" drop /></ToolRow>
        </Group>
        <Group>
          <ToolRow $gap={15}><Btn n="sortAZ" l="升序" /><Btn n="sortZA" l="降序" /></ToolRow>
          <ToolRow $gap={15}><Btn n="filter" l="筛选" /><Btn n="clearFilter" l="清除筛选" /></ToolRow>
        </Group>
        <Group>
          <ToolRow $gap={0}><Pick label="数字格式" value="常规" w={141} /></ToolRow>
          <NumberRow><Btn n="percent" l="百分比" /><Btn n="money" l="会计格式" drop /><Btn n="decLess" l="减少小数位" /><Btn n="decMore" l="增加小数位" /></NumberRow>
        </Group>
        <WideGroup>
          <ToolRow $gap={0}><Btn n="insertCells" l="插入单元格" drop /></ToolRow>
          <ToolRow $gap={0}><Btn n="deleteCells" l="删除单元格" drop /></ToolRow>
        </WideGroup>
        <WideGroup $last>
          <ToolRow $gap={0}><Btn n="condFormat" l="条件格式" drop /></ToolRow>
          <ToolRow $gap={0}><Btn n="table" l="表格样式" drop /></ToolRow>
        </WideGroup>
        <StyleGallery>
          <StyleGrid>
            {STYLES.map(({ t, picked, ...s }) => (
              <StyleSlot key={t} $picked={picked}><StyleChip type="button" {...s}>{t}</StyleChip></StyleSlot>
            ))}
          </StyleGrid>
          <MoreStyles type="button" aria-label="更多样式"><Icon name="bigChevron" /></MoreStyles>
        </StyleGallery>
        <Group>
          <ToolRow $gap={0}><Btn n="replace" l="替换" /></ToolRow>
          <ToolRow $gap={0}><Btn n="selectAll" l="全选" /></ToolRow>
        </Group>
      </Toolbar>

      <Work>
        <LeftRail>
          <RailButton type="button" aria-label="查找"><Icon name="search" /></RailButton>
          <RailButton type="button" aria-label="拼写检查"><Icon name="spell" /></RailButton>
          <RailButton type="button" aria-label="关于"><Icon name="info" /></RailButton>
        </LeftRail>
        <Center>
          <FormulaBar>
            <NameBox><input aria-label="名称框" defaultValue="O9" /><Chevron /></NameBox>
            <FxButton type="button" aria-label="插入函数">fx</FxButton>
            <FormulaInput aria-label="编辑栏" />
            <PlainButton type="button" aria-label="展开编辑栏"><Chevron /></PlainButton>
          </FormulaBar>
          <SheetRow>
            <SheetView>
              <Grid />
              <Chart />
            </SheetView>
            <VScroll>
              <ScrollButton type="button" aria-label="向上"><Triangle d="M0 6h8L4 2z" /></ScrollButton>
              <ScrollThumb><Grip $tall /></ScrollThumb>
              <ScrollButton type="button" aria-label="向下"><Triangle d="M0 2h8L4 6z" /></ScrollButton>
            </VScroll>
          </SheetRow>
          <HScroll>
            <ScrollButton type="button" aria-label="向左"><Triangle d="M6 0v8L2 4z" /></ScrollButton>
            <ScrollThumb><Grip /></ScrollThumb>
            <ScrollButton type="button" aria-label="向右"><Triangle d="M2 0v8l4-4z" /></ScrollButton>
          </HScroll>
        </Center>
        <RightRail>
          <RailButton type="button" aria-label="单元格设置"><Icon name="cellSet" /></RailButton>
          {[["tableSet", "表格设置"], ["shape", "形状设置"], ["image", "图像设置"], ["chart", "图表设置"], ["para", "段落设置"], ["textArt", "艺术字设置"], ["pivot", "透视表设置"], ["slicer", "切片器设置"]].map(([n, l]) => (
            <RailButton key={n} type="button" aria-label={l} $dim><Icon name={n} /></RailButton>
          ))}
        </RightRail>
      </Work>

      <StatusBar>
        <StatusGroup>
          <StatusButton type="button" aria-label="上一张"><Icon name="prev" /></StatusButton>
          <StatusButton type="button" aria-label="下一张"><Icon name="next" /></StatusButton>
        </StatusGroup>
        <StatusGroup>
          <StatusButton type="button" aria-label="添加工作表"><Icon name="plus" /></StatusButton>
          <StatusButton type="button" aria-label="工作表列表"><Icon name="list" /></StatusButton>
        </StatusGroup>
        <SheetTab type="button" $on>Sheet1</SheetTab>
        <SheetTab type="button">Sheet2</SheetTab>
        <SheetTab type="button">Sheet3</SheetTab>
        <ZoomBox>
          <StatusButton type="button" aria-label="缩小"><Icon name="minus" /></StatusButton>
          <ZoomLabel>缩放%100</ZoomLabel>
          <StatusButton type="button" aria-label="放大"><Icon name="plus" /></StatusButton>
        </ZoomBox>
      </StatusBar>

      <Taskbar>
        <HomePill />
        <Tray>
          <TrayIcon $w={38}>
            <svg width="18" height="18" viewBox="0 0 18 18" fill="none" stroke="#333"><path d="M7.500 0.500h3v3h7v9h-7v5h-3v-5h-7v-9h7zM3 6h4.500v4H3zM10.500 6H15v4h-4.500z" /></svg>
          </TrayIcon>
          <TrayIcon $w={58}>
            <svg width="20" height="20" viewBox="0 0 20 20"><path d="M3 2L16 0.500L19.500 16.500L5 19.500L1 8Z" fill="#f04a1d" stroke="#f04a1d" strokeLinejoin="round" /><g transform="translate(3.500 3) scale(0.560 0.620)"><path d={LETTER_S} fill="#fff" /></g></svg>
          </TrayIcon>
          <TrayIcon $w={34}>
            <svg width="20" height="16" viewBox="0 0 20 16" fill="none" stroke="currentColor" strokeWidth="1.500"><path d="M0.500 6Q10-3 19.500 6M3.500 9Q10 2.500 16.500 9M6.500 12Q10 8 13.500 12" /><circle cx="10" cy="14" r="1.500" fill="currentColor" stroke="none" /></svg>
          </TrayIcon>
          <TrayIcon $w={28}>
            <svg width="20" height="16" viewBox="0 0 20 16" fill="none" stroke="currentColor" strokeWidth="1.200"><path d="M0.500 5.500H4L9 1V15L4 10.500H0.500ZM11.500 5.500Q13.500 8 11.500 10.500M14 3.500Q17.500 8 14 12.500M16.500 1Q21.500 8 16.500 15" /></svg>
          </TrayIcon>
          <TrayIcon $w={30}>
            <svg width="20" height="17" viewBox="0 0 20 17" fill="none" stroke="currentColor" strokeWidth="1.500"><path d="M7 3.500H15Q17 3.500 17 5.500V13Q17 15 15 15H4Q2 15 2 13V10" /><path d="M8 6h7v6.500H4.500V10zM18 7h2v4h-2zM5 0L0 6h3L2 10l5-6H4z" fill="currentColor" stroke="none" /></svg>
          </TrayIcon>
          <Clock>12:06</Clock>
        </Tray>
      </Taskbar>

      <ImeBar>
        <ImeButton type="button" $w={27} aria-label="输入法"><svg width="24" height="21" viewBox="0 0 24 21"><path d={LETTER_S} fill="#f27022" /></svg></ImeButton>
        <ImeRule />
        <ImeButton type="button" $w={34}>中</ImeButton>
        <ImeButton type="button" $w={32} aria-label="标点"><svg width="16" height="20" fill="none" stroke="#111" strokeWidth="1.500"><circle cx="5" cy="5" r="3" /><circle cx="10.500" cy="14" r="2" fill="#111" /><path d="M12 14Q12.500 17 9.500 18.500" /></svg></ImeButton>
        <ImeButton type="button" $w={37} aria-label="语音"><svg width="18" height="21" fill="none" stroke="#111" strokeWidth="1.500"><rect x="4" y="1" width="10" height="14" rx="5" /><path d="M1 9.500Q1 17.500 9 17.500T17 9.500M9 17.500V20" /></svg></ImeButton>
        <ImeButton type="button" $w={39} aria-label="软键盘"><svg width="20" height="20" fill="none" stroke="#111" strokeWidth="1.500"><rect x="1" y="1" width="18" height="18" rx="1.500" /><path d="M5.500 6.500h9M5.500 10h9" strokeDasharray="1.600 2.100" /><path d="M6 14h8" /></svg></ImeButton>
        <ImeButton type="button" $w={38} aria-label="皮肤">
          <svg width="24" height="25" viewBox="0 0 24 25">
            <defs><linearGradient id="shirt" x1="0" y1="0" x2="1" y2="1"><stop offset="0" stopColor="#ff5a3c" /><stop offset="0.500" stopColor="#b36bff" /><stop offset="1" stopColor="#4fd6ff" /></linearGradient></defs>
            <path d="M1 8L6 6Q10 10 14 6L19 8L18 13H16V22Q10 24 4 22V13H2Z" fill="url(#shirt)" /><circle cx="20" cy="4" r="4" fill="#ff5533" />
          </svg>
        </ImeButton>
        <ImeButton type="button" $w={38} aria-label="工具箱"><svg width="20" height="20" fill="none" stroke="#111" strokeWidth="1.700"><rect x="1" y="1" width="7" height="7" /><circle cx="15.500" cy="4.500" r="3.600" /><rect x="1" y="12" width="7" height="7" rx="1" /><rect x="12" y="12" width="7" height="7" rx="1" /></svg></ImeButton>
        <ImeButton type="button" $w={38} aria-label="助手">
          <svg width="28" height="27" viewBox="0 0 28 27">
            <circle cx="13" cy="14" r="12" fill="#faf7f7" stroke="#eee4e4" />
            <path d="M3 11Q11 6 19 8L19 14Q11 18 5 19Z" fill="#f27022" /><path d="M6 12l3-1 1 2-4 1zM13 10l3-1v2l-3 1zM5 15l5-1 2 2-3 3-4-1z" fill="#222" />
            <path d="M13 18q4 0 4-2M15 20l3-3" stroke="#555" fill="none" /><path d="M24 5l1.500 3.500L28 10l-2.500 1.500L24 15l-1.500-3.500L20 10l2.500-1.500z" fill="#ffdf4a" />
          </svg>
        </ImeButton>
      </ImeBar>
    </Page>
  );
}
